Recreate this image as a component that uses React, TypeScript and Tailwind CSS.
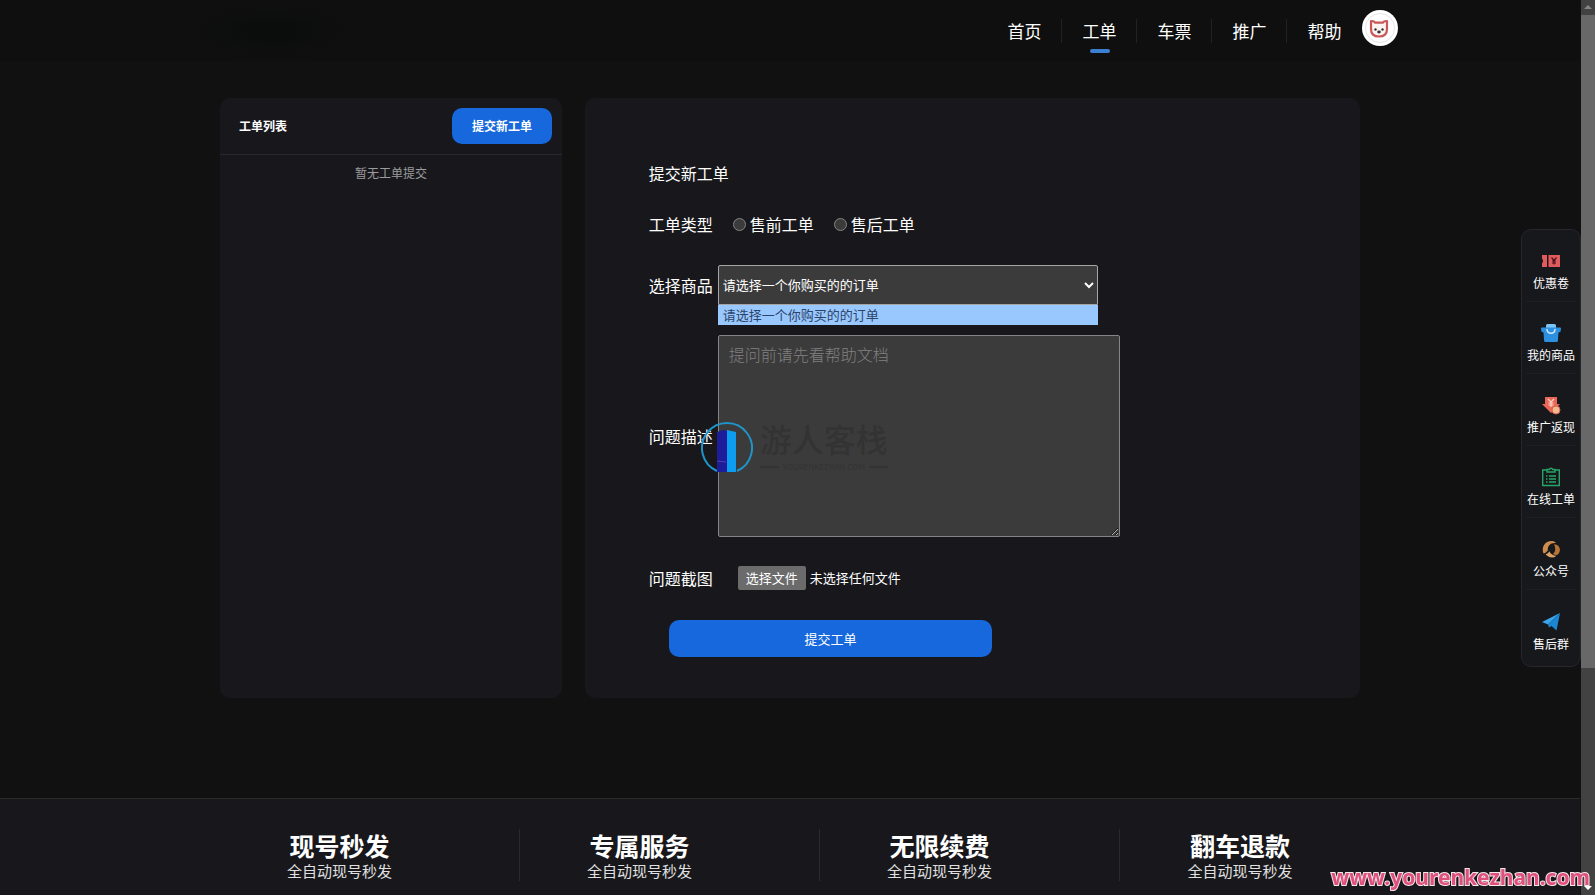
import { ReactNode, useState } from "react";

interface NavItemProps {
  label: string;
  active?: boolean;
}

interface SideItemProps {
  label: string;
  icon: ReactNode;
}

const navItems: NavItemProps[] = [
  { label: "首页" },
  { label: "工单", active: true },
  { label: "车票" },
  { label: "推广" },
  { label: "帮助" },
];

const features = ["现号秒发", "专属服务", "无限续费", "翻车退款"];

const CouponIcon = () => (
  <svg viewBox="0 0 20 20" className="h-5 w-5">
    <path d="M1 4h5v12H1v-3.500q2-2.500 0-5zM7.500 4H19v12H7.500z" fill="#e05a5e" />
    <path d="M10.500 6.500l2.500 3 2.500-3M13 9.500v4M11 10h4M11 12h4" fill="none" stroke="#4a1318" strokeWidth="1.200" />
  </svg>
);

const BagIcon = () => (
  <svg viewBox="0 0 20 20" className="h-5 w-5">
    <path d="M5 5V2.500Q5 1 6.500 1h7Q15 1 15 2.500V5z" fill="#7cc4f8" />
    <path d="M1 4.500h18a1 1 0 0 1 1 1.200l-.5 3-2 .8-.6 8.300a1.300 1.300 0 0 1-1.300 1.200H4.400a1.300 1.300 0 0 1-1.300-1.200l-.6-8.300-2-.8-.5-3a1 1 0 0 1 1-1.200z" fill="#2d8fe0" />
    <path d="M6 6.500c.3 5 7.700 5 8 0" fill="none" stroke="#cdeaff" strokeWidth="1.500" strokeLinecap="round" />
  </svg>
);

const CashbackIcon = () => (
  <svg viewBox="0 0 20 20" className="h-5 w-5">
    <path d="M4 2h12v7h3l-9 9-9-9h3z" fill="#ea6657" />
    <path d="M7 4l3 3 3-3M10 7v5M7.500 8h5M7.500 10h5" fill="none" stroke="#fbd7c8" strokeWidth="1.200" />
    <circle cx="15" cy="15" r="4" fill="#f4b98f" stroke="#d8604c" />
  </svg>
);

const TicketIcon = () => (
  <svg viewBox="0 0 20 20" className="h-5 w-5" fill="none" stroke="#27a567" strokeWidth="1.400">
    <path d="M6 3H1.700v15.500h16.600V3H14" />
    <path d="M6 5V2.500h2.300a1.800 1.800 0 0 1 3.400 0H14V5z" />
    <path d="M8 9h7M8 12h7M8 15h7M5 9h1.500M5 12h1.500M5 15h1.500" />
  </svg>
);

const PublicIcon = () => (
  <svg viewBox="0 0 20 20" className="h-5 w-5">
    <path d="M2.500 14.500C0 8 4 1.500 11.500 2q2.500.3 3.500 2C9 3.500 6.500 7 6.800 11.500q-2 2.500-4.300 3z" fill="#cf8d4d" />
    <path d="M13 5.200q5.500.3 6 5.800-.3 3-2.500 4.800-2.500.4-4.500-.8 4-3.500 1-9.800z" fill="#b87434" />
    <path d="M4.500 15.500q3-.8 3.700-3.300 2.300 4.300 7.300 4.500-5 4.300-11-1.200z" fill="#dca066" />
  </svg>
);

const PlaneIcon = () => (
  <svg viewBox="0 0 20 20" className="h-5 w-5">
    <path d="M19 1L1 10l6 2.500z" fill="#3aa5ea" />
    <path d="M19 1L7 12.500l1 3 2.500-1.500 5 4.500z" fill="#1b87d2" />
  </svg>
);

const sideItems: SideItemProps[] = [
  { label: "优惠卷", icon: <CouponIcon /> },
  { label: "我的商品", icon: <BagIcon /> },
  { label: "推广返现", icon: <CashbackIcon /> },
  { label: "在线工单", icon: <TicketIcon /> },
  { label: "公众号", icon: <PublicIcon /> },
  { label: "售后群", icon: <PlaneIcon /> },
];

const Avatar = () => (
  <svg viewBox="0 0 36 36" className="h-9 w-9">
    <circle cx="18" cy="18" r="18" fill="#fff" />
    <circle cx="18" cy="18" r="14.500" fill="none" stroke="#d5d9d9" strokeWidth=".7" />
    <path
      d="M9 11q3.500 0 4 1.700h8q.5-1.700 4-1.700v8q0 7.500-8 7.500T9 19z"
      fill="#fdf3f0"
      stroke="#c95757"
      strokeWidth="2.200"
      strokeLinejoin="round"
    />
    <circle cx="13.500" cy="19.500" r="1.200" fill="#333" />
    <circle cx="20.500" cy="19.500" r="1.200" fill="#333" />
    <ellipse cx="17" cy="22" rx="1.800" ry="1.400" fill="#333" />
  </svg>
);

const Header = () => (
  <header className="h-[61px] bg-[#0f0f0f]">
    <div className="mx-auto flex h-full max-w-[1216px] justify-between">
      <a
        href="#"
        aria-label="首页"
        className="h-full w-[180px] bg-[radial-gradient(closest-side,#0a0d0b,#0f0f0f)]"
      />
      <div className="flex">
        <nav className="flex items-center">
          {navItems.map((item) => (
            <a
              key={item.label}
              href="#"
              className="group relative flex h-full w-[75px] items-center justify-center text-[17px] leading-6 text-white"
            >
              {item.label}
              {item.active && (
                <span className="absolute bottom-2 left-1/2 h-1 w-5 -translate-x-1/2 rounded-full bg-[#3a7fd0]" />
              )}
              <span className="absolute right-0 h-6 w-px bg-[#222] group-last:hidden" />
            </a>
          ))}
        </nav>
        <button type="button" aria-label="用户中心" className="mt-[10px] h-9">
          <Avatar />
        </button>
      </div>
    </div>
  </header>
);

const TicketList = () => (
  <section className="rounded-[10px] bg-[#18181c]">
    <div className="flex h-[57px] items-center justify-between border-b border-[#28282e] pr-[10px] pl-[19px]">
      <h2 className="text-xs font-bold">工单列表</h2>
      <button type="button" className="h-9 w-[100px] rounded-[10px] bg-[#1668dc] text-xs font-bold">
        提交新工单
      </button>
    </div>
    <p className="pt-[10px] text-center text-xs text-[#9b9b9d]">暂无工单提交</p>
  </section>
);

const Watermark = () => (
  <div className="pointer-events-none absolute top-[86px] -left-[17px] flex items-start gap-[7px]">
    <svg viewBox="0 0 52 52" className="h-[52px] w-[52px]">
      <path d="M16 50A25 25 0 1 1 36 50" fill="none" stroke="#1f94c8" strokeWidth="2" />
      <path d="M16 11l6-2 4 1v41H16z" fill="#1d1d9c" />
      <path d="M26 9l9 2v40h-9z" fill="#0c9cf0" />
      <path d="M16 40l9 1" stroke="#5b3fae" />
    </svg>
    <div className="-mt-1.5 flex flex-col text-[#333]">
      <span className="text-[32px] leading-[46px] font-medium">游人客栈</span>
      <span className="flex items-center gap-1 text-[8px] leading-3">
        <i className="h-[2px] flex-1 bg-[#333]" />
        YOURENKEZHAN.COM
        <i className="h-[2px] flex-1 bg-[#333]" />
      </span>
    </div>
  </div>
);

const TicketForm = () => {
  const [type, setType] = useState("");
  const [fileName, setFileName] = useState("未选择任何文件");

  return (
    <form
      className="rounded-[10px] bg-[#18181c] px-16 pt-[63px] pb-10 text-base"
      onSubmit={(e) => e.preventDefault()}
    >
      <h2>提交新工单</h2>

      <fieldset className="mt-[27px] flex items-center">
        <legend className="float-left">工单类型</legend>
        {["售前工单", "售后工单"].map((label) => (
          <label key={label} className="ml-5 flex items-center gap-1">
            <input
              type="radio"
              name="type"
              checked={type === label}
              onChange={() => setType(label)}
              className="h-[13px] w-[13px] appearance-none rounded-full border border-[#858585] bg-[#3b3b3b] checked:border-4 checked:border-[#1668dc]"
            />
            {label}
          </label>
        ))}
      </fieldset>

      <div className="mt-[29px] flex items-center gap-[5px]">
        <label htmlFor="order">选择商品</label>
        <div className="relative w-[380px]">
          <select
            id="order"
            className="block h-10 w-full appearance-none rounded-t-[2px] border border-[#a5a5a5] bg-[#3b3b3b] px-1 text-[13px] text-white"
          >
            <option>请选择一个你购买的的订单</option>
          </select>
          <svg viewBox="0 0 10 10" className="pointer-events-none absolute top-[15px] right-1 h-[10px] w-[10px]">
            <path d="M1 3l4 4 4-4" fill="none" stroke="#fff" strokeWidth="2" />
          </svg>
          <div className="absolute top-full w-full bg-[#99c8ff] px-[5px] text-[13px] leading-5 text-[#2c4468]">
            请选择一个你购买的的订单
          </div>
        </div>
      </div>

      <div className="mt-[30px] flex items-center gap-[5px]">
        <label htmlFor="desc">问题描述</label>
        <div className="relative w-[402px]">
          <textarea
            id="desc"
            placeholder="提问前请先看帮助文档"
            className="block h-[202px] w-full rounded-[2px] border border-[#858585] bg-[#3b3b3b] px-[10px] py-[6px] font-light placeholder:text-[#808080]"
          />
          <Watermark />
        </div>
      </div>

      <div className="mt-[29px] flex items-center">
        <span>问题截图</span>
        <label className="ml-[25px] flex items-center gap-1 text-[13px]">
          <input
            type="file"
            className="sr-only"
            onChange={(e) => setFileName(e.target.files?.[0]?.name ?? "未选择任何文件")}
          />
          <span className="rounded-[2px] bg-[#6b6b6b] px-2 leading-6">选择文件</span>
          {fileName}
        </label>
      </div>

      <button type="submit" className="mt-[30px] ml-5 block h-[37px] w-1/2 rounded-[10px] bg-[#1668dc] text-[13px]">
        提交工单
      </button>
    </form>
  );
};

const SideBar = () => (
  <aside className="fixed top-[229px] right-[14px] w-[60px] rounded-[10px] border border-[#26262c] bg-[#17181c] px-1 pb-1">
    {sideItems.map((item) => (
      <a
        key={item.label}
        href="#"
        className="flex h-[72px] flex-col items-center justify-end gap-1 border-b border-[#1e1f24] pb-[10px] text-xs whitespace-nowrap last:border-b-0"
      >
        {item.icon}
        {item.label}
      </a>
    ))}
  </aside>
);

const Footer = () => (
  <footer className="mt-[100px] flex-1 border-t border-[#2b2b2b] bg-[#18181c] pt-[30px]">
    <div className="mx-auto grid max-w-[1140px] grid-cols-[5fr_5fr_5fr_4fr]">
      {features.map((title) => (
        <div
          key={title}
          className="border-r border-[#2a2a2e] pr-[60px] text-center last:border-r-0 last:pr-0"
        >
          <h3 className="text-[25px] leading-8 font-bold">{title}</h3>
          <p className="text-[15px] leading-5 text-[#e0e0e0]">全自动现号秒发</p>
        </div>
      ))}
    </div>
  </footer>
);

const ScrollBar = () => (
  <div className="flex w-[15px] shrink-0 flex-col items-center border-l border-[#111] bg-[#424242]">
    <svg viewBox="0 0 14 15" className="h-[15px] w-[14px]">
      <path d="M3 9l4-4 4 4z" fill="#868686" />
    </svg>
    <div className="h-[73%] w-full bg-[#686868]" />
    <svg viewBox="0 0 14 15" className="mt-auto h-[15px] w-[14px]">
      <path d="M3 6l4 4 4-4z" fill="#fff" />
    </svg>
  </div>
);

export default function App() {
  return (
    <div className="flex h-screen overflow-hidden bg-[#111] font-['Noto_Sans_CJK_SC',sans-serif] text-white">
      <div className="flex min-w-0 flex-1 flex-col">
        <Header />
        <main className="mx-auto mt-[37px] grid min-h-[600px] w-full max-w-[1140px] grid-cols-[30%_68%] justify-between">
          <TicketList />
          <TicketForm />
        </main>
        <Footer />
      </div>
      <ScrollBar />
      <SideBar />
      <div className="fixed right-[5px] bottom-1 font-['Noto_Sans',sans-serif] text-[21px] leading-7 font-bold text-[#e0507c] [paint-order:stroke_fill] [-webkit-text-stroke:2px_#f7e6ea]">
        www.yourenkezhan.com
      </div>
    </div>
  );
}
